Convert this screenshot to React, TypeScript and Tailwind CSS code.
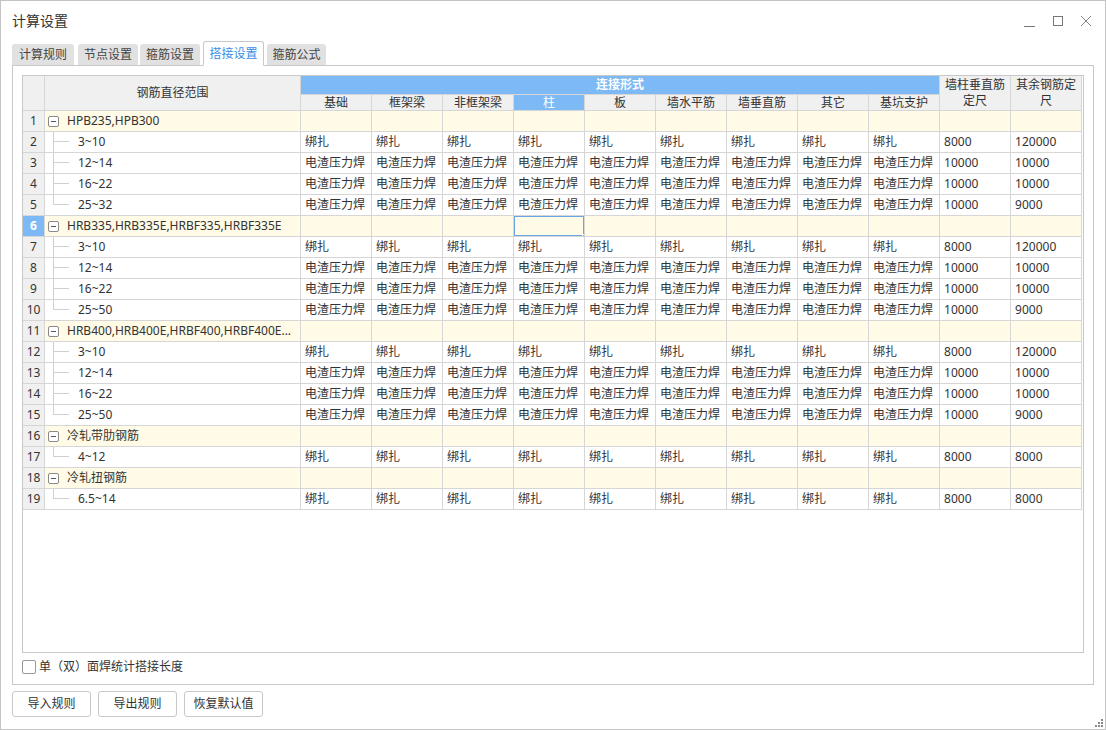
import React from 'react';

type Child = { range: string; kind: 'bind' | 'weld'; a: string; b: string };
type Group = { name: string; children: Child[] };

const groups: Group[] = [
  {
    name: 'HPB235,HPB300',
    children: [
      { range: '3~10', kind: 'bind', a: '8000', b: '120000' },
      { range: '12~14', kind: 'weld', a: '10000', b: '10000' },
      { range: '16~22', kind: 'weld', a: '10000', b: '10000' },
      { range: '25~32', kind: 'weld', a: '10000', b: '9000' },
    ],
  },
  {
    name: 'HRB335,HRB335E,HRBF335,HRBF335E',
    children: [
      { range: '3~10', kind: 'bind', a: '8000', b: '120000' },
      { range: '12~14', kind: 'weld', a: '10000', b: '10000' },
      { range: '16~22', kind: 'weld', a: '10000', b: '10000' },
      { range: '25~50', kind: 'weld', a: '10000', b: '9000' },
    ],
  },
  {
    name: 'HRB400,HRB400E,HRBF400,HRBF400E...',
    children: [
      { range: '3~10', kind: 'bind', a: '8000', b: '120000' },
      { range: '12~14', kind: 'weld', a: '10000', b: '10000' },
      { range: '16~22', kind: 'weld', a: '10000', b: '10000' },
      { range: '25~50', kind: 'weld', a: '10000', b: '9000' },
    ],
  },
  { name: '冷轧带肋钢筋', children: [{ range: '4~12', kind: 'bind', a: '8000', b: '8000' }] },
  { name: '冷轧扭钢筋', children: [{ range: '6.5~14', kind: 'bind', a: '8000', b: '8000' }] },
];

const subCols = ['基础', '框架梁', '非框架梁', '柱', '板', '墙水平筋', '墙垂直筋', '其它', '基坑支护'];

// tabs with their measured widths / left gaps
const tabs = [
  { label: '计算规则', w: 'w-[62px]', ml: 'ml-0' },
  { label: '节点设置', w: 'w-[60px]', ml: 'ml-[4px]' },
  { label: '箍筋设置', w: 'w-[60px]', ml: 'ml-[2px]' },
  { label: '搭接设置', w: 'w-[61px]', ml: 'ml-[3px]' },
  { label: '箍筋公式', w: 'w-[59px]', ml: 'ml-[3px]' },
];

const cell = 'border border-[#d6d6d6] h-[21px] px-[4px] text-left whitespace-nowrap overflow-hidden';

const App = () => {
  let rowNo = 0;
  const rows: React.ReactNode[] = [];

  groups.forEach((g) => {
    rowNo += 1;
    const selected = rowNo === 6;
    rows.push(
      <tr key={`g${rowNo}`} className="bg-[#fffbe6]">
        <td
          className={`border border-[#d6d6d6] h-[21px] text-center ${
            selected ? 'bg-[#7cb9f5] text-white font-bold' : 'bg-[#f0f0f0]'
          }`}
        >
          {rowNo}
        </td>
        <td className="border border-[#d6d6d6] h-[21px] p-0">
          <div className="flex items-center h-[20px]">
            <div className="ml-[3px] w-[11px] h-[11px] border border-[#8a8a8a] rounded-[2px] bg-white flex items-center justify-center">
              <div className="w-[5px] h-px bg-[#555]" />
            </div>
            <span className="ml-[8px] whitespace-nowrap">{g.name}</span>
          </div>
        </td>
        {Array.from({ length: 11 }).map((_, i) => (
          <td key={i} className={`${cell} ${selected && i === 3 ? 'relative' : ''}`}>
            {selected && i === 3 && (
              <>
                <div className="absolute inset-[-1px] border-2 border-[#6aa6e6]" />
                <div className="absolute right-[-3px] bottom-[-3px] w-[5px] h-[5px] bg-[#6aa6e6] border border-white" />
              </>
            )}
          </td>
        ))}
      </tr>
    );
    g.children.forEach((c, ci) => {
      rowNo += 1;
      const last = ci === g.children.length - 1;
      const val = c.kind === 'bind' ? '绑扎' : '电渣压力焊';
      rows.push(
        <tr key={`c${rowNo}`} className="bg-white">
          <td className="border border-[#d6d6d6] h-[21px] text-center bg-[#f0f0f0]">{rowNo}</td>
          <td className="border border-[#d6d6d6] h-[21px] p-0">
            <div className="flex items-stretch h-[20px]">
              <div className="ml-[8px] w-[16px] flex flex-col">
                <div className="h-[10px] border-l border-b border-[#d0d0d0]" />
                <div className={`flex-1 ${last ? '' : 'border-l border-[#d0d0d0]'}`} />
              </div>
              <span className="ml-[9px] self-center whitespace-nowrap">{c.range}</span>
            </div>
          </td>
          {subCols.map((_, i) => (
            <td key={i} className={cell}>
              {val}
            </td>
          ))}
          <td className={cell}>{c.a}</td>
          <td className={cell}>{c.b}</td>
        </tr>
      );
    });
  });

  return (
    <div className="w-[1106px] h-[730px] bg-white border border-[#c4c4c4] relative text-[#333] text-[12px] font-['Noto_Sans','Noto_Sans_CJK_SC',sans-serif] overflow-hidden">
      {/* title bar */}
      <div className="h-[39px] flex items-center pl-[11px] pr-[13px]">
        <span className="text-[14px] leading-none">计算设置</span>
        <div className="ml-auto flex items-center gap-[16px]">
          <svg width="12" height="12" viewBox="0 0 12 12">
            <path d="M0 11.5 H11" stroke="#777" strokeWidth="1" />
          </svg>
          <svg width="12" height="12" viewBox="0 0 12 12">
            <rect x="1.5" y="1.5" width="9" height="9" fill="none" stroke="#777" strokeWidth="1" />
          </svg>
          <svg width="12" height="12" viewBox="0 0 12 12">
            <path d="M1 1 L11 11 M11 1 L1 11" stroke="#888" strokeWidth="1" />
          </svg>
        </div>
      </div>

      {/* tabs */}
      <div className="flex items-end pl-[11px] h-[25px]">
        {tabs.map((t) =>
          t.label === '搭接设置' ? (
            <div
              key={t.label}
              className={`${t.w} ${t.ml} h-[25px] flex items-center justify-center bg-white border border-[#c8c8c8] border-b-white rounded-t-[3px] text-[#3a8ee6] relative z-10 mb-[-1px]`}
            >
              {t.label}
            </div>
          ) : (
            <div
              key={t.label}
              className={`${t.w} ${t.ml} h-[21px] flex items-center justify-center bg-[#e1e1e1] rounded-t-[3px] text-[#444]`}
            >
              {t.label}
            </div>
          )
        )}
      </div>

      {/* panel */}
      <div className="ml-[11px] w-[1082px] h-[620px] border border-[#c8c8c8] pt-[9px] pl-[9px] flex flex-col">
        <div className="w-[1062px] h-[578px] border border-[#c8c8c8] overflow-hidden">
          <table className="table-fixed border-collapse w-[1060px] -mt-px -ml-px">
            <colgroup>
              <col className="w-[22px]" />
              <col className="w-[256px]" />
              {Array.from({ length: 11 }).map((_, i) => (
                <col key={i} className="w-[71px]" />
              ))}
            </colgroup>
            <thead>
              <tr>
                <th rowSpan={2} className="border border-[#d6d6d6] bg-[#f0f0f0]" />
                <th rowSpan={2} className="border border-[#d6d6d6] bg-[#f0f0f0] font-normal">
                  钢筋直径范围
                </th>
                <th colSpan={9} className="border border-[#d6d6d6] border-t-[#6aa6e6] bg-[#7cb9f5] text-white font-bold h-[18px]">
                  连接形式
                </th>
                <th rowSpan={2} className="border border-[#d6d6d6] bg-[#f0f0f0] font-normal leading-[16px] px-[2px]">
                  墙柱垂直筋定尺
                </th>
                <th rowSpan={2} className="border border-[#d6d6d6] bg-[#f0f0f0] font-normal leading-[16px] px-[2px]">
                  其余钢筋定尺
                </th>
              </tr>
              <tr>
                {subCols.map((c) => (
                  <th
                    key={c}
                    className={`border border-[#d6d6d6] h-[16px] font-normal leading-[15px] ${
                      c === '柱' ? 'bg-[#7cb9f5] text-white font-bold' : 'bg-[#f0f0f0]'
                    }`}
                  >
                    {c}
                  </th>
                ))}
              </tr>
            </thead>
            <tbody>{rows}</tbody>
          </table>
        </div>

        <label className="flex items-center mt-[6px] h-[15px]">
          <span className="w-[14px] h-[14px] border border-[#999] rounded-[2px] bg-white" />
          <span className="ml-[3px]">单（双）面焊统计搭接长度</span>
        </label>
      </div>

      {/* buttons */}
      <div className="flex gap-[7px] pl-[11px] mt-[6px]">
        {['导入规则', '导出规则', '恢复默认值'].map((b) => (
          <button
            key={b}
            className="w-[79px] h-[26px] border border-[#c8c8c8] rounded-[3px] bg-white text-[12px] text-[#333]"
          >
            {b}
          </button>
        ))}
      </div>

      {/* resize grip */}
      <svg className="absolute right-[2px] bottom-[2px]" width="9" height="9" viewBox="0 0 9 9">
        <rect x="7" y="1" width="2" height="2" fill="#888" />
        <rect x="4" y="4" width="2" height="2" fill="#888" />
        <rect x="7" y="4" width="2" height="2" fill="#888" />
        <rect x="1" y="7" width="2" height="2" fill="#888" />
        <rect x="4" y="7" width="2" height="2" fill="#888" />
        <rect x="7" y="7" width="2" height="2" fill="#888" />
      </svg>
    </div>
  );
};

export default App;
